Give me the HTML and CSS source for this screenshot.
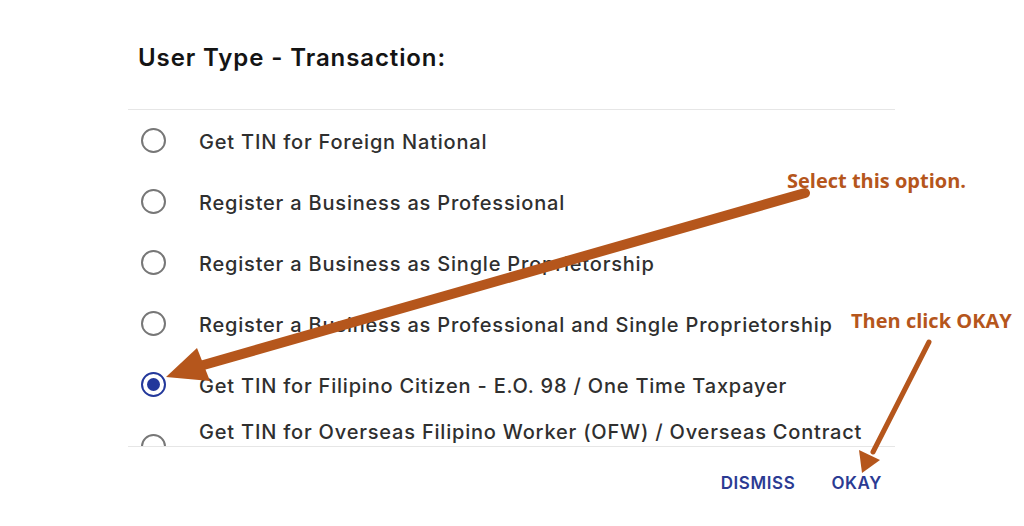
FILE: index.html
```html
<!DOCTYPE html>
<html lang="en">
<head>
<meta charset="utf-8">
<title>User Type - Transaction</title>
<link rel="stylesheet" href="styles.css">
</head>
<body>
<div class="page">
  <div class="dialog">
    <div class="header">
      <h1 class="title">User Type - Transaction:</h1>
    </div>
    <div class="list">
      <div class="option"><span class="radio"></span><span class="label">Get TIN for Foreign National</span></div>
      <div class="option"><span class="radio"></span><span class="label">Register a Business as Professional</span></div>
      <div class="option"><span class="radio"></span><span class="label">Register a Business as Single Proprietorship</span></div>
      <div class="option"><span class="radio"></span><span class="label">Register a Business as Professional and Single Proprietorship</span></div>
      <div class="option"><span class="radio checked"></span><span class="label">Get TIN for Filipino Citizen - E.O. 98 / One Time Taxpayer</span></div>
      <div class="option option-tall"><span class="radio"></span><span class="label">Get TIN for Overseas Filipino Worker (OFW) / Overseas Contract<br>Worker (OCW)</span></div>
    </div>
    <div class="footer">
      <span class="btn">DISMISS</span>
      <span class="btn">OKAY</span>
    </div>
  </div>

  <svg class="arrows" width="1024" height="526" viewBox="0 0 1024 526">
    <line x1="805" y1="193" x2="200" y2="366" stroke="#b5561c" stroke-width="10" stroke-linecap="round"/>
    <polygon points="166,377 210,381 197,348" fill="#b5561c"/>
    <line x1="929" y1="342" x2="873" y2="452" stroke="#b5561c" stroke-width="5" stroke-linecap="round"/>
    <polygon points="862,473 880,460 859,450" fill="#b5561c"/>
  </svg>
  <div class="note note-select">Select this option.</div>
  <div class="note note-okay">Then click OKAY</div>
</div>
</body>
</html>
```

FILE: styles.css
```css
html, body {
  margin: 0;
  padding: 0;
  background: #ffffff;
}

.page {
  position: relative;
  width: 1024px;
  height: 526px;
  overflow: hidden;
  font-family: Inter, "Open Sans", "DejaVu Sans", sans-serif;
}

.dialog {
  margin-left: 128px;
  width: 767px;
}

.header {
  height: 110px;
  box-sizing: border-box;
  padding: 44px 0 0 10px;
  border-bottom: 1px solid #e6e6e6;
}

.title {
  margin: 0;
  font-size: 24px;
  line-height: 28px;
  font-weight: 600;
  color: #141414;
  letter-spacing: 0.9px;
}

.list {
  height: 336px;
  overflow: hidden;
}

.option {
  display: flex;
  align-items: center;
  min-height: 61px;
  padding: 6px 0;
  box-sizing: border-box;
}

.option-tall {
  padding: 3px 0 9px;
}

.radio {
  flex: none;
  width: 21px;
  height: 21px;
  border: 2px solid #777777;
  border-radius: 50%;
  margin-left: 13px;
  margin-right: 33px;
  position: relative;
}

.option-tall .radio {
  margin-top: 6px;
}

.radio.checked {
  border-color: #23389b;
}

.radio.checked::after {
  content: "";
  position: absolute;
  left: 4px;
  top: 4px;
  width: 13px;
  height: 13px;
  border-radius: 50%;
  background: #23389b;
}

.label {
  font-size: 20px;
  line-height: 24px;
  padding-top: 2px;
  font-weight: 500;
  color: #2f2f2f;
  letter-spacing: 0.8px;
}

.footer {
  border-top: 1px solid #e6e6e6;
  display: flex;
  justify-content: flex-end;
  gap: 36px;
  padding: 26px 13px 0 0;
}

.btn {
  font-size: 17px;
  line-height: 20px;
  font-weight: 600;
  color: #2b3b93;
  letter-spacing: 0.6px;
}

.arrows {
  position: absolute;
  left: 0;
  top: 0;
  pointer-events: none;
}

.note {
  position: absolute;
  font-family: "Open Sans", Lato, sans-serif;
  font-weight: 700;
  font-size: 20px;
  line-height: 24px;
  color: #b5561c;
  white-space: nowrap;
}

.note-select {
  left: 787px;
  top: 169px;
}

.note-okay {
  left: 851px;
  top: 309px;
}
```
